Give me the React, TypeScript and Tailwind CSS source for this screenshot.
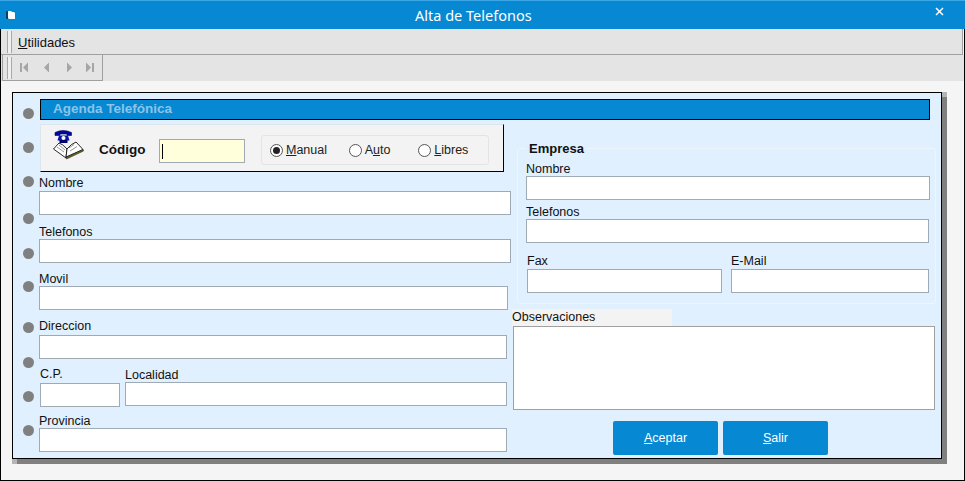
const sans = "font-['Liberation_Sans',Arial,sans-serif]";

function Dot({ className }: { className: string }) {
  return <div className={`h-[11px] w-[11px] rounded-full bg-[#808080] ${className}`} />;
}

function Field({ className = "" }: { className?: string }) {
  return <div className={`h-6 border border-[#a0aab4] bg-white ${className}`} />;
}

function Label({ children, className = "" }: { children: React.ReactNode; className?: string }) {
  return <div className={`h-[15px] text-[12.5px] leading-[17px] text-[#111] ${className}`}>{children}</div>;
}

function Radio({ checked, children, className }: { checked?: boolean; children: React.ReactNode; className: string }) {
  return (
    <div className={`flex items-center gap-[3px] text-[12.5px] text-[#222] ${className}`}>
      <span className="flex h-[13px] w-[13px] items-center justify-center rounded-full border border-[#555] bg-white">
        {checked && <span className="h-[7px] w-[7px] rounded-full bg-[#222]" />}
      </span>
      <span>{children}</span>
    </div>
  );
}

function NavIcon({ dir, bar, className }: { dir: "l" | "r"; bar?: boolean; className: string }) {
  return (
    <svg width={bar ? 8 : 7} height="11" viewBox={bar ? "0 0 8 11" : "0 0 7 11"} className={`text-[#a6a6a6] ${className}`}>
      {dir === "l" && bar && (
        <>
          <rect x="0" y="1" width="2" height="9" fill="currentColor" />
          <path d="M8 0.5v10L3 5.5z" fill="currentColor" />
        </>
      )}
      {dir === "l" && !bar && <path d="M6 0.5v10L1 5.5z" fill="currentColor" />}
      {dir === "r" && !bar && <path d="M1 0.5v10L6 5.5z" fill="currentColor" />}
      {dir === "r" && bar && (
        <>
          <path d="M0 0.5v10L5 5.5z" fill="currentColor" />
          <rect x="6" y="1" width="2" height="9" fill="currentColor" />
        </>
      )}
    </svg>
  );
}

function BookPhone() {
  return (
    <svg width="32" height="32" viewBox="0 0 32 32">
      {/* phone */}
      <path d="M2 4.5Q10 0.5 18.5 4.5V7.5H14V6H7V7.5H2z" fill="#000a9a" stroke="#00006a" strokeWidth="0.6" />
      <path d="M6 7.5H15L16.5 12.5H4.5z" fill="#0a14b0" />
      <circle cx="10.5" cy="10" r="2" fill="#fff" />
      <rect x="6.5" y="12" width="8" height="3" fill="#00006a" />
      {/* book */}
      <path d="M14 21Q9 15.5 6 15L0.5 21L13 30z" fill="#fff" stroke="#111" strokeWidth="0.9" />
      <path d="M14 21Q18 16 23 14L30 21.5L13 29z" fill="#fff" stroke="#111" strokeWidth="0.9" />
      <path d="M13 29.5L30 21.5L30.5 23L13.5 31z" fill="#6b6b20" stroke="#111" strokeWidth="0.5" />
      <path d="M4 19l7 5M6 17l6 5M16 20l5-3.5M17 23l7-4.5" stroke="#777" strokeWidth="0.8" fill="none" />
    </svg>
  );
}

export default function App() {
  return (
    <div className={`flex h-[481px] w-[965px] flex-col overflow-hidden bg-[#f5f5f5] ${sans}`}>
      {/* title bar */}
      <div className="flex h-[29px] shrink-0 items-center border-t border-[#3ba7e6] bg-[#0688d2] text-white">
        <svg width="10" height="10" viewBox="0 0 10 10" className="ml-[6px]">
          <path d="M2 1h3l1 1h2l1 1v6H3L2 8z" fill="#fff" />
          <path d="M1 1v7h1" stroke="#10243a" strokeWidth="1.4" fill="none" />
        </svg>
        <div className="ml-[399px] mt-px w-[120px] whitespace-nowrap font-['Noto_Sans',sans-serif] text-[14.5px]">Alta de Telefonos</div>
        <svg width="9" height="9" viewBox="0 0 9 9" className="mb-[8px] ml-[400px]">
          <path d="M1 1l7 7M8 1l-7 7" stroke="#fff" strokeWidth="1.5" />
        </svg>
      </div>

      <div className="flex min-h-0 flex-1 flex-col border-x border-b border-black">
        {/* menu */}
        <div className="mr-px flex h-[26px] shrink-0 items-center border-r border-b border-[#a0a0a0] bg-[#e4e4e4]">
          <div className="ml-[6px] h-[22px] w-[5px] border-x border-[#a8a8a8] bg-[#f0f0f0]" />
          <div className="ml-[6px] mt-[2px] text-[13px] text-[#111]">
            <span className="underline">U</span>tilidades
          </div>
        </div>

        {/* toolbar */}
        <div className="h-[26px] shrink-0 bg-[#e4e4e4]">
          <div className="ml-px flex h-[26px] w-[101px] items-center border-x border-b border-[#a0a0a0]">
            <div className="ml-[4px] h-[22px] w-[5px] border-x border-[#a8a8a8] bg-[#f0f0f0]" />
            <NavIcon dir="l" bar className="ml-[8px]" />
            <NavIcon dir="l" className="ml-[15px]" />
            <NavIcon dir="r" className="ml-[16px]" />
            <NavIcon dir="r" bar className="ml-[13px]" />
          </div>
        </div>

        {/* body */}
        <div className="flex-1 pl-[11px] pt-[11px]">
          <div className="flex h-[367px] w-[930px] border border-black bg-[#e0f0fe] shadow-[5px_5px_0_#808080,5px_0_0_#b5b5b5,0_5px_0_#b5b5b5]">
            {/* dot column */}
            <div className="ml-[10px] flex w-[11px] shrink-0 flex-col">
              <Dot className="mt-[15px]" />
              <Dot className="mt-[23px]" />
              <Dot className="mt-[23px]" />
              <Dot className="mt-[26px]" />
              <Dot className="mt-[24px]" />
              <Dot className="mt-[22px]" />
              <Dot className="mt-[30px]" />
              <Dot className="mt-[24px]" />
              <Dot className="mt-[23px]" />
              <Dot className="mt-[23px]" />
            </div>

            <div className="ml-[5px] flex flex-col">
              {/* heading */}
              <div className="ml-px mt-[6px] flex h-[21px] w-[890px] items-center border border-black bg-[#0688d2] pb-px pl-3 text-[13.5px] font-bold text-[#8cc3e6]">
                Agenda Telefónica
              </div>

              <div className="flex">
                {/* left column */}
                <div className="flex w-[473px] flex-col">
                  <div className="ml-px mt-[4px] flex h-[48px] w-[464px] items-center border border-t-[#dbe6ef] border-r-black border-b-black border-l-[#dbe6ef] bg-[#f3f3f3] pt-[4px]">
                    <div className="ml-[12px] mt-[-12px]"><BookPhone /></div>
                    <div className="ml-[14px] w-[48px] text-[13.5px] font-bold text-[#111]">Código</div>
                    <div className="ml-[12px] mt-[2px] flex h-6 w-[86px] items-center border border-[#a0aab4] bg-[#ffffdc] pl-[2px]">
                      <div className="h-[15px] w-px bg-black" />
                    </div>
                    <div className="ml-[16px] flex h-[30px] w-[228px] items-center rounded-[3px] border border-[#e4e4e4] pl-[8px]">
                      <Radio checked className="w-[79px]">
                        <span className="underline">M</span>anual
                      </Radio>
                      <Radio className="w-[70px]">
                        A<span className="underline">u</span>to
                      </Radio>
                      <Radio className="w-[70px]">
                        <span className="underline">L</span>ibres
                      </Radio>
                    </div>
                  </div>

                  <Label className="mt-[3px]">Nombre</Label>
                  <Field className="mt-[1px] w-[472px]" />
                  <Label className="mt-[9px]">Telefonos</Label>
                  <Field className="w-[472px]" />
                  <Label className="mt-[8px]">Movil</Label>
                  <Field className="w-[469px]" />
                  <Label className="mt-[8px]">Direccion</Label>
                  <Field className="mt-[2px] w-[468px]" />

                  <div className="flex items-start">
                    <div className="ml-px w-[85px]">
                      <Label className="mt-[7px]">C.P.</Label>
                      <Field className="mt-[2px] w-[80px]" />
                    </div>
                    <div className="flex-1">
                      <Label className="mt-[8px]">Localidad</Label>
                      <Field className="w-[382px]" />
                    </div>
                  </div>

                  <Label className="mt-[6px]">Provincia</Label>
                  <Field className="w-[468px]" />
                </div>

                {/* right column */}
                <div className="flex flex-col">
                  <fieldset className="ml-[5px] mt-[19px] h-[165px] w-[419px] rounded-[3px] border border-[#eef6fc] pl-[8px]">
                    <legend className="px-[3px] text-[13px] font-bold text-[#111]">Empresa</legend>
                    <Label className="mt-[2px]">Nombre</Label>
                    <Field className="w-[404px]" />
                    <Label className="mt-[4px]">Telefonos</Label>
                    <Field className="w-[403px]" />
                    <div className="mt-[9px] flex">
                      <div className="ml-px w-[204px]">
                        <Label className="mt-px">Fax</Label>
                        <Field className="mt-px w-[195px]" />
                      </div>
                      <div>
                        <Label className="mt-px">E-Mail</Label>
                        <Field className="mt-px w-[198px]" />
                      </div>
                    </div>
                  </fieldset>

                  <div className="mt-[5px] h-[17px] w-[160px] bg-[#f3f3f3] text-[12.5px] leading-[17px] text-[#111]">Observaciones</div>
                  <div className="ml-px h-[84px] w-[422px] border border-[#a0a0a0] bg-white" />

                  <div className="ml-[101px] mt-[11px] flex gap-[5px]">
                    <div className="flex h-[34px] w-[105px] items-center justify-center rounded-[2px] bg-[#0688d2] text-[12.5px] text-white">
                      <span><span className="underline">A</span>ceptar</span>
                    </div>
                    <div className="flex h-[34px] w-[105px] items-center justify-center rounded-[2px] bg-[#0688d2] text-[12.5px] text-white">
                      <span><span className="underline">S</span>alir</span>
                    </div>
                  </div>
                </div>
              </div>
            </div>
          </div>
        </div>
      </div>
    </div>
  );
}
